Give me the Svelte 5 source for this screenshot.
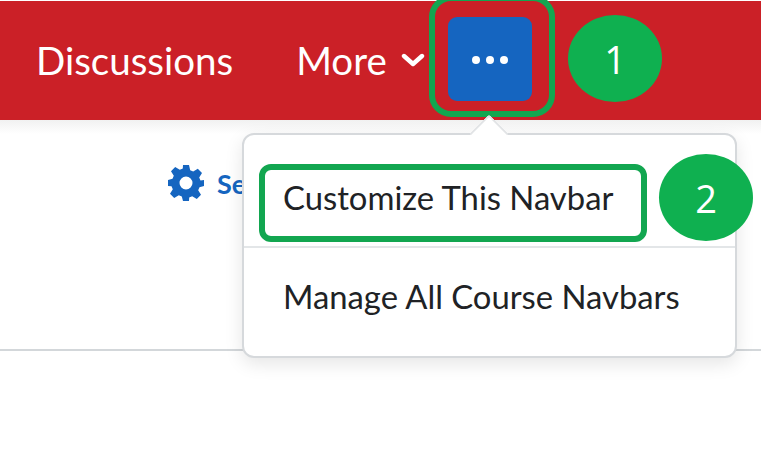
<script lang="ts">
	const menuItems = ['Customize This Navbar', 'Manage All Course Navbars'];
</script>

<div class="page">
	<nav class="navbar">
		<a class="nav-link discussions" href="#discussions">Discussions</a>
		<a class="nav-link more" href="#more">
			More
			<svg class="chevron" viewBox="0 0 24 14" width="24" height="14" aria-hidden="true">
				<path d="M3 3l9 8 9-8" fill="none" stroke="#fff" stroke-width="4.4" stroke-linecap="round" stroke-linejoin="round" />
			</svg>
		</a>
		<button class="dots" aria-label="More actions">
			<span></span><span></span><span></span>
		</button>
	</nav>

	<main class="content">
		<div class="settings">
			<svg class="gear" viewBox="0 0 36 36" width="36" height="36" aria-hidden="true">
				<path
					fill-rule="evenodd"
					d="M15 0h6l1.200 5.200 3 1.300 4.600-2.800 4.200 4.200-2.800 4.600 1.300 3L36 15v6l-4.500 1.200-1.300 3 2.800 4.600-4.200 4.200-4.600-2.800-3 1.300L21 36h-6l-1.200-4.500-3-1.300-4.600 2.800-4.200-4.200 2.800-4.600-1.300-3L0 21v-6l4.500-1.200 1.300-3-2.800-4.600 4.200-4.200 4.600 2.800 3-1.300zM18 11.500a6.500 6.500 0 1 0 0 13 6.500 6.500 0 0 0 0-13z"
				/>
			</svg>
			<span>Se</span>
		</div>
	</main>

	<div class="ring"></div>
	<div class="badge badge-one">1</div>

	<div class="menu">
		<div class="caret"></div>
		{#each menuItems as item}
			<div class="menu-item">{item}</div>
		{/each}
	</div>

	<div class="highlight"></div>
	<div class="badge badge-two">2</div>
</div>

<style>
	:global(body) {
		margin: 0;
		background: #fff;
	}

	.page {
		position: relative;
		width: 761px;
		height: 450px;
		overflow: hidden;
		background: #fff;
		font-family: Lato, 'Open Sans', sans-serif;
	}

	.navbar {
		display: flex;
		align-items: center;
		height: 119px;
		margin-top: 1px;
		padding-left: 36px;
		background: #cb2027;
	}

	.nav-link {
		display: flex;
		align-items: center;
		color: #fff;
		font-size: 38.5px;
		text-decoration: none;
		padding-bottom: 2px;
	}

	.discussions {
		margin-right: 63px;
	}

	.chevron {
		margin-left: 14px;
		margin-top: 1px;
	}

	.dots {
		display: flex;
		align-items: center;
		justify-content: center;
		gap: 6px;
		width: 84px;
		height: 84px;
		margin-left: 23px;
		margin-top: -3px;
		padding: 2px 0 0;
		border: 0;
		border-radius: 9px;
		background: #1565c0;
	}

	.dots span {
		width: 8px;
		height: 8px;
		border-radius: 50%;
		background: #fff;
	}

	.content {
		height: 231px;
		box-sizing: border-box;
		padding: 45px 0 0 168px;
		border-bottom: 2px solid #d3d7da;
		background: linear-gradient(#f1f1f1, #fff 14px);
	}

	.settings {
		display: flex;
		align-items: center;
		gap: 13px;
		color: #1565c0;
		font-size: 27px;
		font-weight: 700;
	}

	.gear {
		fill: #1565c0;
	}

	.ring {
		position: absolute;
		left: 429px;
		top: -5px;
		width: 114px;
		height: 110px;
		border: 6.5px solid #12a650;
		border-radius: 22px;
	}

	.badge {
		position: absolute;
		z-index: 3;
		display: flex;
		align-items: center;
		justify-content: center;
		width: 94px;
		height: 87px;
		border-radius: 50%;
		background: #0fb050;
		color: #fff;
		font-family: 'Open Sans', Lato, sans-serif;
		font-size: 38px;
	}

	.badge-one {
		left: 568px;
		top: 15px;
	}

	.badge-two {
		left: 659px;
		top: 154px;
	}

	.menu {
		position: absolute;
		left: 242px;
		top: 133px;
		width: 495px;
		height: 225px;
		box-sizing: border-box;
		padding-top: 15px;
		border: 2px solid #d6d9dc;
		border-radius: 12px;
		background: #fff;
		box-shadow: 0 6px 18px rgba(0, 0, 0, 0.1);
	}

	.caret {
		position: absolute;
		left: 231px;
		top: -15px;
		width: 26px;
		height: 26px;
		background: #fff;
		border-top: 2px solid #e2e4e6;
		border-left: 2px solid #e2e4e6;
		border-top-left-radius: 3px;
		transform: rotate(45deg);
	}

	.menu-item {
		position: relative;
		display: flex;
		align-items: center;
		box-sizing: border-box;
		height: 96px;
		padding: 0 0 2px 39px;
		color: #202225;
		font-size: 32.8px;
	}

	.menu-item + .menu-item {
		height: 98px;
		padding-bottom: 0;
		border-top: 2px solid #e3e6e8;
	}

	.highlight {
		position: absolute;
		left: 259px;
		top: 164px;
		width: 376px;
		height: 66px;
		border: 6px solid #12a650;
		border-radius: 12px;
	}
</style>
